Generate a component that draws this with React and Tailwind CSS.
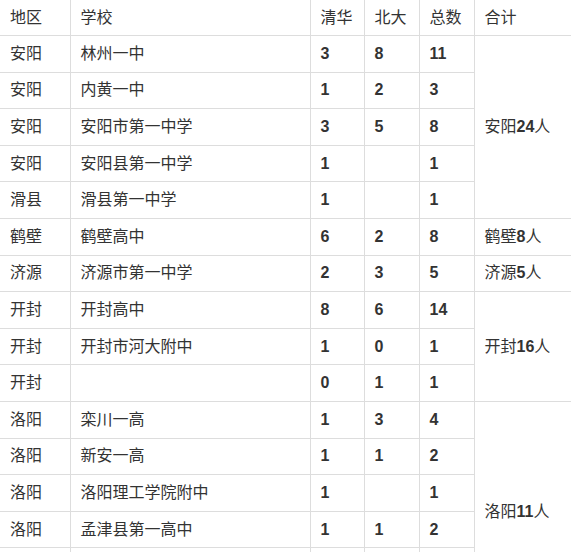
const rows = [
  { area: '安阳', school: '林州一中', qh: '3', bd: '8', total: '11', sum: { text: '安阳', num: '24', span: 5 } },
  { area: '安阳', school: '内黄一中', qh: '1', bd: '2', total: '3' },
  { area: '安阳', school: '安阳市第一中学', qh: '3', bd: '5', total: '8' },
  { area: '安阳', school: '安阳县第一中学', qh: '1', bd: '', total: '1' },
  { area: '滑县', school: '滑县第一中学', qh: '1', bd: '', total: '1' },
  { area: '鹤壁', school: '鹤壁高中', qh: '6', bd: '2', total: '8', sum: { text: '鹤壁', num: '8', span: 1 } },
  { area: '济源', school: '济源市第一中学', qh: '2', bd: '3', total: '5', sum: { text: '济源', num: '5', span: 1 } },
  { area: '开封', school: '开封高中', qh: '8', bd: '6', total: '14', sum: { text: '开封', num: '16', span: 3 } },
  { area: '开封', school: '开封市河大附中', qh: '1', bd: '0', total: '1' },
  { area: '开封', school: '', qh: '0', bd: '1', total: '1' },
  { area: '洛阳', school: '栾川一高', qh: '1', bd: '3', total: '4', sum: { text: '洛阳', num: '11', span: 6 } },
  { area: '洛阳', school: '新安一高', qh: '1', bd: '1', total: '2' },
  { area: '洛阳', school: '洛阳理工学院附中', qh: '1', bd: '', total: '1' },
  { area: '洛阳', school: '孟津县第一高中', qh: '1', bd: '1', total: '2' },
  // rows below the visible edge, left blank
  { area: '', school: '', qh: '', bd: '', total: '' },
  { area: '', school: '', qh: '', bd: '', total: '' },
];

const cell = 'h-[36.6px] px-[10px] py-0 align-middle border border-[#dddddd] text-left';
const head = 'h-[35.6px] px-[10px] py-0 align-middle border border-[#dddddd] text-left font-normal';

export default function App() {
  return (
    <div className="h-[552px] w-[579px] overflow-hidden bg-white">
      <table
        className="w-[571px] table-fixed border-collapse border-hidden text-[16px] text-[#333333]"
        style={{ fontFamily: '"Liberation Sans", "Noto Sans CJK SC", sans-serif' }}
      >
        <colgroup>
          <col className="w-[70px]" />
          <col className="w-[240px]" />
          <col className="w-[54px]" />
          <col className="w-[55px]" />
          <col className="w-[55px]" />
          <col className="w-[97px]" />
        </colgroup>
        <thead>
          <tr>
            <th className={head}>地区</th>
            <th className={head}>学校</th>
            <th className={head}>清华</th>
            <th className={head}>北大</th>
            <th className={head}>总数</th>
            <th className={head}>合计</th>
          </tr>
        </thead>
        <tbody>
          {rows.map((r, i) => (
            <tr key={i}>
              <td className={cell}>{r.area}</td>
              <td className={cell}>{r.school}</td>
              <td className={cell + ' font-bold'}>{r.qh}</td>
              <td className={cell + ' font-bold'}>{r.bd}</td>
              <td className={cell + ' font-bold'}>{r.total}</td>
              {r.sum && (
                <td className={cell} rowSpan={r.sum.span}>
                  {r.sum.text}
                  <b>{r.sum.num}</b>人
                </td>
              )}
            </tr>
          ))}
        </tbody>
      </table>
    </div>
  );
}
